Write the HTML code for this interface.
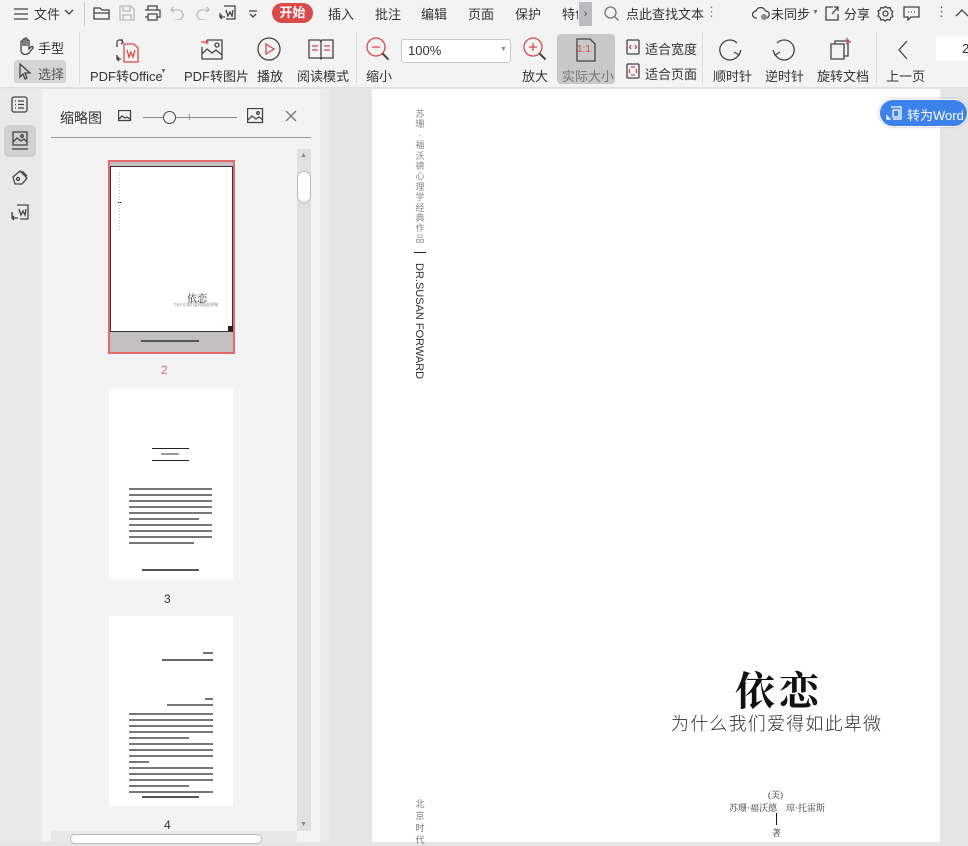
<!DOCTYPE html>
<html><head><meta charset="utf-8">
<style>
*{margin:0;padding:0;box-sizing:border-box}
body{width:968px;height:842px;overflow:hidden;background:#e5e5e5;font-family:"Liberation Sans","Noto Sans CJK SC",sans-serif;font-size:13px;color:#333;position:relative}
.a{position:absolute}
.top{left:0;top:0;width:968px;height:88px;background:#f3f3f3;border-bottom:1px solid #e0e0e0}
.t{position:absolute;white-space:nowrap}
.r1{top:4px}
.ico{position:absolute;fill:none;stroke:#444;stroke-width:1.3}
.lines div{height:1.5px;background:#777;margin:0 0 4.5px 0}
.serif{font-family:"Liberation Serif","Noto Serif CJK SC",serif}
</style></head><body>
<div class="a top"></div>
<!-- row1 -->
<svg class="ico" style="left:13px;top:7px" width="16" height="14"><path d="M1 2h14M1 7h14M1 12h14"/></svg>
<div class="t r1" style="left:34px">文件</div>
<svg class="ico" style="left:64px;top:9px" width="10" height="8"><path d="M1 1l4 4 4-4"/></svg>
<div class="a" style="left:84px;top:2px;width:1px;height:24px;background:#ccc"></div>
<svg class="ico" style="left:93px;top:5px" width="18" height="16"><path d="M1 3h6l2 2h7v9H1z M1 8h15"/></svg>
<svg class="ico" style="left:119px;top:5px;stroke:#bbb" width="16" height="16"><path d="M1 1h11l3 3v11H1z M4 1v5h7V1 M4 15v-5h8v5"/></svg>
<svg class="ico" style="left:144px;top:5px" width="17" height="16"><path d="M4 5V1h9v4 M1 5h15v7h-3 M4 12H1 M4 9h9v6H4z"/></svg>
<svg class="ico" style="left:170px;top:6px;stroke:#bbb" width="14" height="14"><path d="M3 1L1 4l3 2 M1 4h7a5 5 0 010 10H5"/></svg>
<svg class="ico" style="left:196px;top:6px;stroke:#bbb" width="14" height="14"><path d="M11 1l2 3-3 2 M13 4H6a5 5 0 000 10h3"/></svg>
<svg class="ico" style="left:219px;top:4px" width="18" height="18"><path d="M5 2h11v13H7 M7 6l2 6 2-4 2 4 1-6 M1 13h5 M3 11l-2 2 2 2 M1 9v4"/></svg>
<svg class="ico" style="left:248px;top:10px" width="10" height="8"><path d="M1 1h8 M2 4l3 3 3-3"/></svg>
<div class="a" style="left:272px;top:3px;width:41px;height:20px;border-radius:10px;background:#d94a4a;color:#fff;font-weight:bold;text-align:center;line-height:20px">开始</div>
<div class="t r1" style="left:328px">插入</div>
<div class="t r1" style="left:375px">批注</div>
<div class="t r1" style="left:421px">编辑</div>
<div class="t r1" style="left:468px">页面</div>
<div class="t r1" style="left:515px">保护</div>
<div class="t r1" style="left:562px;width:16px;overflow:hidden">特色</div>
<div class="a" style="left:579px;top:2px;width:13px;height:24px;background:#bbbcc0;color:#555;font-size:11px;text-align:center;line-height:24px">›</div>
<svg class="ico" style="left:604px;top:6px;stroke:#777" width="16" height="16"><circle cx="6.5" cy="6.5" r="5.5"/><path d="M10.5 10.5l4 4"/></svg>
<div class="t r1" style="left:626px">点此查找文本</div>
<div class="t" style="left:705px;top:4px;color:#777">⋮</div>
<svg class="ico" style="left:752px;top:5px" width="18" height="16"><path d="M5 13H4a3.5 3.5 0 010-7 5 5 0 019.5 0A3.5 3.5 0 0114 13"/><circle cx="12" cy="12" r="3" fill="#888" stroke="none"/></svg>
<div class="t r1" style="left:771px">未同步</div>
<div class="t" style="left:812px;top:9px;font-size:7px;color:#777">▼</div>
<svg class="ico" style="left:824px;top:5px" width="16" height="16"><path d="M9 2H2v13h12V9 M8 9l6-7 M10 2h4v4"/></svg>
<div class="t r1" style="left:844px">分享</div>
<svg class="ico" style="left:877px;top:5px" width="17" height="17"><circle cx="8.5" cy="8.5" r="2.5"/><path d="M8.5 1.5l2 1.5 2.5-.5.8 2.5 2 1.5-1 2.5 1 2.5-2 1-1 2.5-2.5-.5-2 1.5-2-1.5-2.5.5-.8-2.5-2-1.5 1-2.5-1-2.5 2-1 1-2.5 2.5.5z"/></svg>
<svg class="ico" style="left:903px;top:6px" width="17" height="15"><path d="M1 1h15v10H8l-3 3v-3H1z M5 6h1 M8 6h1 M11 6h1"/></svg>
<div class="t" style="left:935px;top:4px;color:#555">⋮</div>
<svg class="ico" style="left:955px;top:9px" width="13" height="8"><path d="M1 7l6-6 6 6"/></svg>

<!-- row2 -->
<svg class="ico" style="left:17px;top:37px" width="18" height="18"><path d="M4 10V5a1 1 0 012 0v4V3a1 1 0 012 0v6V2a1 1 0 012 0v7V4a1 1 0 012 0v8l2-2a1 1 0 012 1l-4 5c-1 1-2 1.5-4 1.5H8c-2 0-4-2-4-4z"/></svg>
<div class="t" style="left:38px;top:38px">手型</div>
<div class="a" style="left:14px;top:60px;width:52px;height:23px;background:#d4d4d4;border-radius:3px"></div>
<svg class="ico" style="left:18px;top:63px" width="14" height="17"><path d="M2 1v13l3-3 2 5 2-1-2-5h5z"/></svg>
<div class="t" style="left:38px;top:64px;color:#555">选择</div>
<div class="a" style="left:79px;top:32px;width:1px;height:52px;background:#ddd"></div>
<svg class="ico" style="left:115px;top:38px" width="26" height="26"><path d="M8 2H4a2 2 0 00-2 2v5 M6 2l2 2-2 2 M2 17v4h4 M4 19l-2 2 2 2" /><path d="M9 6h10l4 4v14H9z M12 12l2 7 2-5 2 5 2-7" stroke="#d94a4a"/></svg>
<div class="t" style="left:90px;top:66px">PDF转Office</div>
<div class="t" style="left:160px;top:68px;font-size:7px;color:#777">▼</div>
<svg class="ico" style="left:200px;top:37px" width="24" height="24"><path d="M7 3h15v19H2V10 M2 17l5-5 5 4 4-3 6 5"/><circle cx="17" cy="8" r="2"/><path d="M1 5h7 M6 3l2 2-2 2" stroke="#d94a4a"/></svg>
<div class="t" style="left:184px;top:66px">PDF转图片</div>
<svg class="ico" style="left:257px;top:37px" width="24" height="24"><circle cx="12" cy="12" r="11"/><path d="M9 7v10l8-5z" stroke="#d94a4a"/></svg>
<div class="t" style="left:257px;top:66px">播放</div>
<svg class="ico" style="left:308px;top:38px" width="26" height="22"><path d="M1 2h11l1 2 1-2h11v18H14l-1 1-1-1H1z M13 4v16" /><path d="M4 8h6 M4 12h6 M16 8h6 M16 12h6" stroke="#d94a4a"/></svg>
<div class="t" style="left:297px;top:66px">阅读模式</div>
<div class="a" style="left:356px;top:32px;width:1px;height:52px;background:#ddd"></div>
<svg class="ico" style="left:366px;top:37px;stroke:#d94a4a" width="24" height="24"><circle cx="10" cy="10" r="9"/><path d="M6 10h8"/><path d="M16.5 16.5l6 6" stroke="#444" stroke-width="2"/></svg>
<div class="t" style="left:366px;top:66px">缩小</div>
<div class="a" style="left:401px;top:39px;width:110px;height:24px;background:#fff;border:1px solid #c8c8c8;border-radius:3px"></div>
<div class="t" style="left:408px;top:43px">100%</div>
<div class="t" style="left:500px;top:46px;font-size:7px;color:#888">▼</div>
<svg class="ico" style="left:523px;top:37px;stroke:#d94a4a" width="24" height="24"><circle cx="10" cy="10" r="9"/><path d="M6 10h8 M10 6v8"/><path d="M16.5 16.5l6 6" stroke="#444" stroke-width="2"/></svg>
<div class="t" style="left:522px;top:66px">放大</div>
<div class="a" style="left:557px;top:34px;width:58px;height:50px;background:#c8c8c8;border-radius:4px"></div>
<svg class="ico" style="left:576px;top:38px" width="20" height="24"><path d="M1 1h13l5 5v17H1z"/></svg>
<div class="t" style="left:577px;top:44px;font-size:10px;color:#d94a4a">1:1</div>
<div class="t" style="left:562px;top:66px;color:#777">实际大小</div>
<svg class="ico" style="left:626px;top:39px" width="14" height="16"><rect x="1" y="1" width="12" height="14" rx="1"/><path d="M5 6L3.5 8 5 10 M9 6l1.5 2L9 10" stroke="#d94a4a"/></svg>
<div class="t" style="left:645px;top:39px">适合宽度</div>
<svg class="ico" style="left:626px;top:63px" width="14" height="16"><rect x="1" y="1" width="12" height="14" rx="1"/><path d="M5 4h4 M5 12h4 M3.5 6v4 M10.5 6v4" stroke="#d94a4a"/></svg>
<div class="t" style="left:645px;top:64px">适合页面</div>
<div class="a" style="left:702px;top:32px;width:1px;height:52px;background:#ddd"></div>
<svg class="ico" style="left:719px;top:38px" width="24" height="24"><path d="M20 16A10 10 0 1118 5 M15 14l5 3 2-5"/></svg>
<div class="t" style="left:713px;top:66px">顺时针</div>
<svg class="ico" style="left:771px;top:38px" width="24" height="24"><path d="M4 16A10 10 0 106 5 M9 14l-5 3-2-5"/></svg>
<div class="t" style="left:765px;top:66px">逆时针</div>
<svg class="ico" style="left:828px;top:36px" width="26" height="26"><path d="M3 8h13v15H3z M7 8V5h13v15h-4"/><path d="M18 2l3 3-3 3 M22 5v2" stroke="#d94a4a"/></svg>
<div class="t" style="left:817px;top:66px">旋转文档</div>
<div class="a" style="left:876px;top:32px;width:1px;height:52px;background:#ddd"></div>
<svg class="ico" style="left:897px;top:40px" width="12" height="20"><path d="M10 1L2 10l8 9"/></svg>
<div class="t" style="left:886px;top:66px">上一页</div>
<div class="a" style="left:936px;top:37px;width:32px;height:24px;background:#fff"></div>
<div class="t" style="left:962px;top:41px">2</div>

<!-- left strip -->
<div class="a" style="left:0;top:89px;width:42px;height:753px;background:#e9e9e9"></div>
<svg class="ico" style="left:11px;top:96px" width="17" height="17"><rect x="1" y="1" width="15" height="15" rx="2"/><path d="M4 5h1 M7 5h6 M4 8.5h1 M7 8.5h6 M4 12h1 M7 12h6"/></svg>
<div class="a" style="left:4px;top:125px;width:32px;height:32px;background:#d0d0d0;border-radius:5px"></div>
<svg class="ico" style="left:11px;top:131px" width="18" height="20"><path d="M2 1h14v13H2z M2 11l4-4 4 3 3-2 3 3 M1 18h16"/><circle cx="11" cy="5" r="1.3"/></svg>
<svg class="ico" style="left:11px;top:169px" width="18" height="18"><path d="M9 2l7 7-5 6H4L2 8z M11 2l5 5"/><circle cx="7" cy="10" r="1.5"/></svg>
<svg class="ico" style="left:11px;top:203px" width="18" height="18"><path d="M6 2h11v14H9 M8 6l2 6 2-4 2 4 1-6 M1 15h6 M3 13l-2 2 2 2 M1 9v6"/></svg>

<!-- panel -->
<div class="a" style="left:42px;top:89px;width:278px;height:753px;background:#f3f3f3"></div>
<div class="t" style="left:60px;top:108px;font-size:14px">缩略图</div>
<svg class="ico" style="left:118px;top:110px" width="14" height="12"><rect x=".5" y=".5" width="12" height="10"/><path d="M1 9l3-3 3 2 2-1 3 2"/></svg>
<div class="a" style="left:143px;top:117px;width:94px;height:1px;background:#888"></div>
<div class="a" style="left:189px;top:114px;width:1px;height:6px;background:#999"></div>
<div class="a" style="left:163px;top:111px;width:13px;height:13px;border-radius:50%;border:1.3px solid #444;background:#f3f3f3"></div>
<svg class="ico" style="left:247px;top:108px" width="17" height="16"><rect x=".5" y=".5" width="15" height="14"/><path d="M1 12l4-4 4 3 3-2 4 3"/><circle cx="11" cy="5" r="1.3"/></svg>
<svg class="ico" style="left:285px;top:110px;stroke:#777" width="12" height="12"><path d="M1 1l10 10 M11 1L1 11"/></svg>
<div class="a" style="left:51px;top:137px;width:260px;height:1px;background:#999"></div>
<!-- scrollbar -->
<div class="a" style="left:297px;top:149px;width:14px;height:682px;background:#e0e0e0"></div>
<div class="t" style="left:300px;top:152px;font-size:7px;color:#888">▲</div>
<div class="a" style="left:297px;top:171px;width:14px;height:32px;background:#fff;border:1px solid #bbb;border-radius:7px"></div>
<div class="t" style="left:300px;top:821px;font-size:7px;color:#888">▼</div>
<div class="a" style="left:51px;top:831px;width:246px;height:11px;background:#e8e8e8"></div>
<div class="a" style="left:70px;top:834px;width:192px;height:10px;background:#fff;border:1px solid #bbb;border-radius:5px"></div>

<!-- thumb 2 -->
<div class="a" style="left:108px;top:160px;width:127px;height:194px;background:#c1bfbf;border:2px solid #e26a6a"></div>
<div class="a" style="left:110px;top:166px;width:123px;height:166px;background:#fff;border:1px solid #333"></div>
<div class="a" style="left:118px;top:202px;width:3px;height:1px;background:#000"></div>
<div class="a" style="left:119px;top:172px;width:1px;height:60px;background:repeating-linear-gradient(#bbb 0 1px,transparent 1px 3px)"></div>
<div class="t serif" style="left:187px;top:290px;font-size:10px;color:#222">依恋</div>
<div class="t" style="left:174px;top:302px;font-size:4px;color:#888">为什么我们爱得如此卑微</div>
<div class="a" style="left:228px;top:326px;width:5px;height:5px;background:#222"></div>
<div class="a" style="left:141px;top:340px;width:58px;height:2px;background:#555"></div>
<div class="t" style="left:161px;top:363px;color:#e26a6a;font-size:12px">2</div>
<!-- thumb 3 -->
<div class="a" style="left:109px;top:389px;width:124px;height:190px;background:#fff"></div>
<div class="a" style="left:152px;top:448px;width:37px;height:1px;background:#222"></div>
<div class="a" style="left:161px;top:453px;width:18px;height:2px;background:#999"></div>
<div class="a" style="left:152px;top:460px;width:37px;height:1px;background:#222"></div>
<div class="a lines" style="left:129px;top:488px;width:83px"><div></div><div></div><div></div><div></div><div></div><div style="width:70px"></div><div></div><div></div><div></div><div style="width:65px"></div></div>
<div class="a" style="left:142px;top:569px;width:57px;height:2px;background:#555"></div>
<div class="t" style="left:164px;top:592px;font-size:12px">3</div>
<!-- thumb 4 -->
<div class="a" style="left:109px;top:616px;width:124px;height:190px;background:#fff"></div>
<div class="a" style="left:203px;top:652px;width:10px;height:2px;background:#777"></div>
<div class="a" style="left:162px;top:659px;width:51px;height:2px;background:#666"></div>
<div class="a" style="left:205px;top:698px;width:8px;height:2px;background:#777"></div>
<div class="a" style="left:167px;top:704px;width:46px;height:2px;background:#777"></div>
<div class="a lines" style="left:129px;top:713px;width:84px"><div></div><div></div><div></div><div></div><div style="width:60px"></div><div></div><div></div><div></div><div style="width:20px"></div><div></div><div></div><div></div><div style="width:60px"></div><div></div></div>
<div class="a" style="left:142px;top:796px;width:57px;height:2px;background:#555"></div>
<div class="t" style="left:164px;top:818px;font-size:12px">4</div>

<!-- gutter & main -->
<div class="a" style="left:320px;top:89px;width:10px;height:753px;background:#eaeaea"></div>
<div class="a" style="left:330px;top:89px;width:638px;height:753px;background:#e5e5e5"></div>
<div class="a" style="left:372px;top:89px;width:568px;height:753px;background:#fff"></div>
<div class="t" style="left:415px;top:109px;width:10px;font-size:9px;line-height:10.4px;color:#888;white-space:normal;text-align:center">苏珊·福沃德心理学经典作品</div>
<div class="a" style="left:414px;top:252px;width:12px;height:1px;background:#222"></div>
<div class="t" style="left:413px;top:263px;writing-mode:vertical-rl;font-size:11px;color:#333;font-family:'Liberation Sans',sans-serif">DR.SUSAN FORWARD</div>
<div class="t" style="left:415px;top:798px;width:10px;font-size:9px;line-height:12px;color:#777;white-space:normal;text-align:center">北京时代</div>
<div class="t serif" style="left:735px;top:660px;font-size:40px;font-weight:bold;color:#111;letter-spacing:4px">依恋</div>
<div class="t" style="left:671px;top:710px;font-size:18px;color:#333;letter-spacing:1.2px;font-weight:300">为什么我们爱得如此卑微</div>
<div class="t serif" style="left:768px;top:788px;font-size:9px">(美)</div>
<div class="t serif" style="left:729px;top:801px;font-size:9px">苏珊·福沃德　琼·托雷斯</div>
<div class="a" style="left:776px;top:813px;width:1px;height:12px;background:#111"></div>
<div class="t serif" style="left:772px;top:826px;font-size:9px">著</div>

<!-- convert button -->
<div class="a" style="left:879px;top:99px;width:89px;height:28px;border-radius:14px;background:#3d82ea;border:1px solid #fff;box-shadow:0 0 2px #aaa"></div>
<svg class="ico" style="left:886px;top:105px;stroke:#fff" width="16" height="16"><path d="M5 2h10v12H7 M7 5v7h6V5z M1 10v4h4 M3 12l-2 2"/></svg>
<div class="t" style="left:907px;top:105px;color:#fff;font-size:13px">转为Word</div>
</body></html>
